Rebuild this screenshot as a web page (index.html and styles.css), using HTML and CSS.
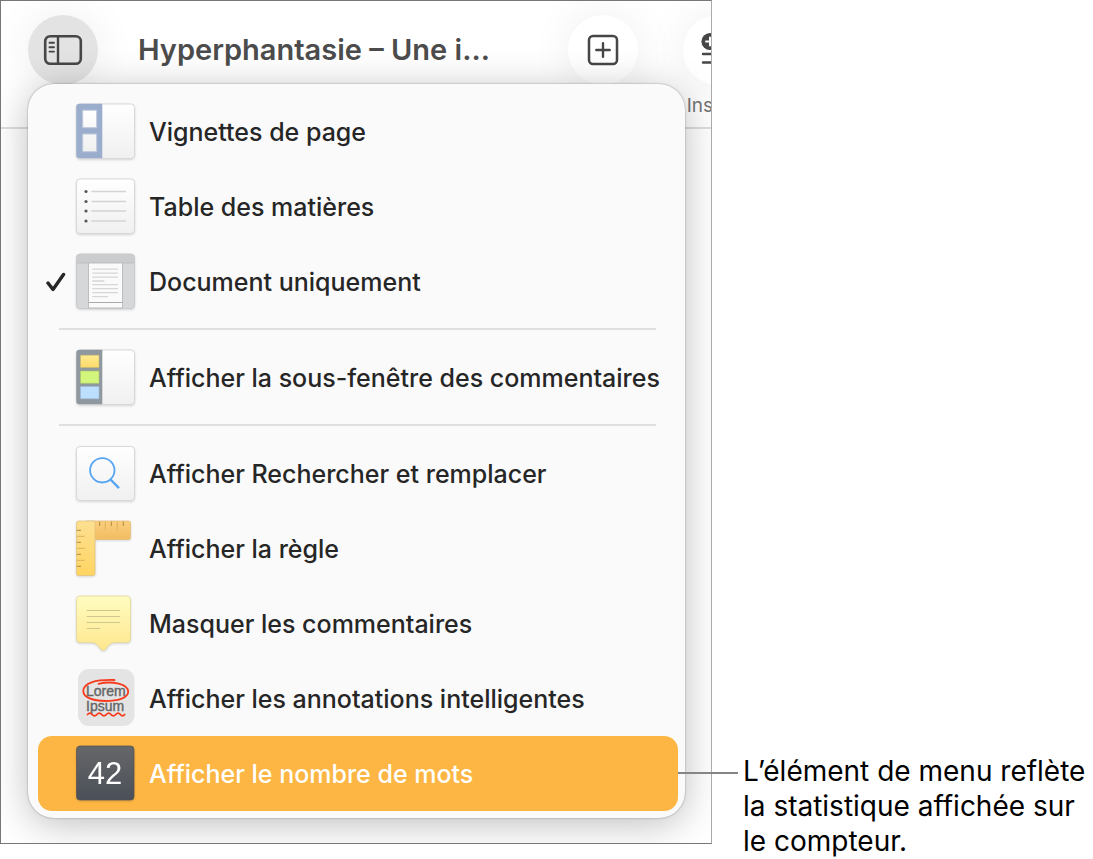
FILE: index.html
```html
<!DOCTYPE html>
<html lang="fr">
    <head>
        <meta charset="utf-8">
        <title>Menu Présentation</title>
        <link rel="stylesheet" href="styles.css">
    </head>
    <body>
        <div class="figure">
            <div class="window">
                <div class="toolbar">
                    <button class="tool tool-view" type="button" aria-label="Présentation">
                        <svg width="40" height="32" viewBox="0 0 40 32" fill="none" stroke="#464646">
                            <rect x="2.2" y="2.2" width="35.6" height="27.6" rx="5" stroke-width="2.6"/>
                            <path d="M15 2v28" stroke-width="2.4"/>
                            <path d="M6.5 8.8h4.5M6.5 13.2h4.5M6.5 17.6h4.5" stroke-width="1.9" stroke-linecap="round"/>
                        </svg>
                    </button>
                    <h1 class="title">Hyperphantasie – Une i...</h1>
                    <button class="tool" type="button" aria-label="Ajouter une page">
                        <svg width="32" height="32" viewBox="0 0 32 32" fill="none" stroke="#464646">
                            <rect x="2" y="2" width="28" height="28" rx="4" stroke-width="2.5"/>
                            <path d="M16 9.3v13.4M9.3 16h13.4" stroke-width="2.4" stroke-linecap="round"/>
                        </svg>
                    </button>
                    <div class="insert">
                        <button class="tool" type="button" aria-labelledby="insert-label">
                            <svg width="36" height="36" viewBox="0 0 36 36" fill="none" stroke="#464646" stroke-width="2.4" stroke-linecap="round">
                                <circle cx="10" cy="9.5" r="8.6" fill="#464646" stroke="none"/>
                                <path d="M10 5.5v8M6 9.500h8" stroke="#fff" stroke-width="2"/>
                                <path d="M23 5h11M23 13h11M3 22h31M3 30.5h31"/>
                            </svg>
                        </button>
                        <span id="insert-label">Insérer</span>
                    </div>
                </div>
                <div class="menu" role="menu">
                    <button class="item" type="button" role="menuitem">
                        <span class="check"></span>
                        <svg class="icon" viewBox="0 0 60 58">
                            <defs>
                                <linearGradient id="paper" x1="0" y1="0" x2="0" y2="1">
                                    <stop offset="0" stop-color="#fff"/>
                                    <stop offset="1" stop-color="#f0f0f0"/>
                                </linearGradient>
                            </defs>
                            <rect x="1.5" y="1" width="58" height="54.5" rx="3.5" fill="url(#paper)" stroke="#d9d9d9"/>
                            <path d="M27.3 .8v54.5H4.5a3.2 3.2 0 0 1-3.2-3.2V4A3.2 3.2 0 0 1 4.5.8z" fill="#9badcc"/>
                            <path d="M7.7 7.2h14v17.5h-14zM7.7 31h14v17.7h-14z" fill="url(#paper)" stroke="#bdc8dc"/>
                        </svg>
                        Vignettes de page
                    </button>
                    <button class="item" type="button" role="menuitem">
                        <span class="check"></span>
                        <svg class="icon" viewBox="0 0 60 58">
                            <rect x="1.5" y="1" width="58" height="54.5" rx="3.5" fill="url(#paper)" stroke="#d9d9d9"/>
                            <g fill="#55575a">
                                <circle cx="11" cy="13.5" r="1.6"/>
                                <circle cx="11" cy="23.5" r="1.6"/>
                                <circle cx="11" cy="33" r="1.6"/>
                                <circle cx="11" cy="43" r="1.6"/>
                            </g>
                            <path d="M16.3 13.5H51M16.3 23.5H51M16.3 33H51M16.3 43H51" stroke="#d4d4d4" stroke-width="1.4"/>
                        </svg>
                        Table des matières
                    </button>
                    <button class="item" type="button" role="menuitem">
                        <span class="check">
                            <svg width="20" height="20" viewBox="0 0 20 20" fill="none" stroke="#262626" stroke-width="3.4" stroke-linecap="round" stroke-linejoin="round">
                                <path d="M2 11l5 6.5L17.5 2.5"/>
                            </svg>
                        </span>
                        <svg class="icon" viewBox="0 0 60 58">
                            <rect x="1.5" y="1" width="58" height="54.5" rx="3.5" fill="#d5d7d9" stroke="#c9cbcd"/>
                            <path d="M1.5 10V4.5A3.5 3.5 0 0 1 5 1h51a3.5 3.5 0 0 1 3.5 3.5V10z" fill="#cbcccd"/>
                            <path d="M1.5 10h58" stroke="#bebfc0"/>
                            <path d="M13.5 10h34v45h-34z" fill="#fafafa" stroke="#bcbdbf"/>
                            <path d="M13.5 49.5h34" stroke="#a9aaac"/>
                            <path d="M17.3 16.2H43M17.3 20.2H43M17.3 24.2H43M17.3 28h12M17.3 31.7H43M17.3 35.7H43M17.3 39.7H43M17.3 43.7H33" stroke="#d5d6d7" stroke-width="1.3"/>
                        </svg>
                        Document uniquement
                    </button>
                    <hr class="separator">
                    <button class="item" type="button" role="menuitem">
                        <span class="check"></span>
                        <svg class="icon" viewBox="0 0 60 58">
                            <defs>
                                <linearGradient id="note-yellow" x1="0" y1="0" x2="0" y2="1">
                                    <stop offset="0" stop-color="#ffea91"/>
                                    <stop offset="1" stop-color="#fcdb68"/>
                                </linearGradient>
                            </defs>
                            <rect x="1.5" y="1" width="58" height="54.5" rx="3.5" fill="url(#paper)" stroke="#d9d9d9"/>
                            <path d="M27.3 .8v54.5H4.5a3.2 3.2 0 0 1-3.2-3.2V4A3.2 3.2 0 0 1 4.5.8z" fill="#8f979f"/>
                            <path d="M5.5 6.2H24v12.3H5.5z" fill="url(#note-yellow)" stroke="#c8b96f" stroke-width=".6"/>
                            <path d="M5.5 22H24v12.3H5.5z" fill="#d2f57c" stroke="#abc66b" stroke-width=".6"/>
                            <path d="M5.5 37.5H24v12.3H5.5z" fill="#bddfff" stroke="#9cb9d4" stroke-width=".6"/>
                        </svg>
                        Afficher la sous-fenêtre des commentaires
                    </button>
                    <hr class="separator">
                    <button class="item" type="button" role="menuitem">
                        <span class="check"></span>
                        <svg class="icon" viewBox="0 0 60 58">
                            <rect x="1.5" y="1.5" width="58" height="54" rx="3.5" fill="url(#paper)" stroke="#d9d9d9"/>
                            <g fill="none" stroke="#56a5f2">
                                <circle cx="27.3" cy="25.3" r="12.2" stroke-width="1.8"/>
                                <path d="M35.5 34.5l8.5 8.7" stroke-width="2.4"/>
                            </g>
                        </svg>
                        Afficher Rechercher et remplacer
                    </button>
                    <button class="item" type="button" role="menuitem">
                        <span class="check"></span>
                        <svg class="icon" viewBox="0 0 60 58">
                            <defs>
                                <linearGradient id="ruler-v" x1="0" y1="0" x2="0" y2="1">
                                    <stop offset="0" stop-color="#fddf91"/>
                                    <stop offset="1" stop-color="#ffd562"/>
                                </linearGradient>
                                <linearGradient id="ruler-h" x1="0" y1="0" x2="0" y2="1">
                                    <stop offset="0" stop-color="#fccd7c"/>
                                    <stop offset="1" stop-color="#f2bd61"/>
                                </linearGradient>
                            </defs>
                            <rect x="10" y="1" width="45.5" height="18.5" rx="2" fill="url(#ruler-h)" stroke="#e3bb75" stroke-width=".7"/>
                            <rect x="1.5" y="1" width="18.5" height="54.5" rx="2" fill="url(#ruler-v)" stroke="#e0c078" stroke-width=".7"/>
                            <path d="M1.8 10.3H6M1.8 22.3H6M1.8 34.3H6M1.8 46.3H6M24.7 1.5V6M36.3 1.5V6M48.3 1.5V6" stroke="#ab8b43"/>
                            <path d="M1.8 16.3h8M1.8 28.3h8M1.8 40.3h8M30.3 1.5v8M42.3 1.5v8" stroke="#dcb35e"/>
                        </svg>
                        Afficher la règle
                    </button>
                    <button class="item" type="button" role="menuitem">
                        <span class="check"></span>
                        <svg class="icon" viewBox="0 0 60 58">
                            <defs>
                                <linearGradient id="note" x1="0" y1="0" x2="0" y2="1">
                                    <stop offset="0" stop-color="#fffcc0"/>
                                    <stop offset="1" stop-color="#fee78e"/>
                                </linearGradient>
                            </defs>
                            <path d="M5 1h47a3.5 3.5 0 0 1 3.5 3.5V44a3.5 3.5 0 0 1-3.5 3.5H41c-4 0-6 1-8 3.5l-2.5 3.5q-2.2 2-4.4 0L23.5 51c-2-2.5-4-3.5-8-3.5H5A3.5 3.5 0 0 1 1.5 44V4.5A3.5 3.5 0 0 1 5 1z" fill="url(#note)" stroke="#e2d799" stroke-width=".8"/>
                            <path d="M11.7 15.5H45M11.7 21.5H45M11.7 27.5H45M11.7 33.5h13.6" stroke="#cfc78f"/>
                        </svg>
                        Masquer les commentaires
                    </button>
                    <button class="item" type="button" role="menuitem">
                        <span class="check"></span>
                        <svg class="icon flat" viewBox="0 0 60 58">
                            <rect x="3" y="-1" width="56.5" height="57" rx="11" fill="#e4e4e4"/>
                            <text class="lorem" x="11" y="26">Lorem</text>
                            <text class="lorem" x="11" y="41">Ipsum</text>
                            <g fill="none" stroke="#f83a1c" stroke-linecap="round">
                                <path d="M23.5 13.8C37 10.5 53.5 14 53.2 21.8 53 28.5 42 31 30.5 31 18 31 8.3 27.5 8.3 21 8.3 13 20 9.5 39.5 10" stroke-width="1.8"/>
                                <path d="M12.5 44.5q2.4-2.8 4.7 0t4.7 0 4.7 0 4.7 0 4.7 0 4.7 0 4.7 0 4.2 0" stroke-width="1.8"/>
                            </g>
                        </svg>
                        Afficher les annotations intelligentes
                    </button>
                    <button class="item selected" type="button" role="menuitem">
                        <span class="check"></span>
                        <svg class="icon" viewBox="0 0 60 58">
                            <defs>
                                <linearGradient id="counter" x1="0" y1="0" x2="0" y2="1">
                                    <stop offset="0" stop-color="#666769"/>
                                    <stop offset="1" stop-color="#4a4f58"/>
                                </linearGradient>
                            </defs>
                            <rect x="1.5" y="1" width="57.5" height="54" rx="3.5" fill="url(#counter)" stroke="#4f5053" stroke-width=".7"/>
                            <text class="count" x="30" y="39">42</text>
                        </svg>
                        Afficher le nombre de mots
                    </button>
                </div>
            </div>
            <p class="callout">L’élément de menu reflète la statistique affichée sur le compteur.</p>
        </div>
    </body>
</html>
```
FILE: styles.css
```css
* {
    box-sizing: border-box;
}
body {
    margin: 0;
    background: #fff;
    font-family: Inter, "Liberation Sans", Arial, sans-serif;
}
button {
    border: 0;
    padding: 0;
    background: none;
    font: inherit;
    color: inherit;
}
.figure {
    display: flex;
    align-items: flex-end;
}
.window {
    flex: 1;
    min-width: 0;
    overflow: hidden;
    margin-bottom: 15px;
    border: 1px solid #77767b;
    border-right-color: #aaa;
}
.toolbar {
    display: flex;
    align-items: flex-start;
    height: 128px;
    padding: 14px 0 0 27px;
    border-bottom: 2px solid #dedede;
}
.tool {
    display: flex;
    flex: none;
    align-items: center;
    justify-content: center;
    width: 70px;
    height: 70px;
    border-radius: 50%;
    background: #fff;
    box-shadow: 0 0 44px rgba(0, 0, 0, 0.07);
}
.tool-view {
    background: #e3e3e3;
}
.title {
    flex: 1;
    margin: 0 0 0 40px;
    font-size: 29px;
    font-weight: 600;
    line-height: 70px;
    white-space: nowrap;
    color: #4c4c4c;
}
.insert {
    display: flex;
    flex: none;
    flex-direction: column;
    align-items: center;
    gap: 8px;
    width: 70px;
    margin: 0 -42px 0 45px;
    font-size: 19px;
    line-height: 26px;
    color: #747474;
}
.menu {
    position: relative;
    display: flex;
    flex-direction: column;
    margin: -45px 26px 25px 27px;
    padding: 10px 7px 7px 10px;
    border-radius: 26px;
    background: #fafafa;
    box-shadow: 0 0 2px rgba(0, 0, 0, 0.4), 0 6px 38px rgba(0, 0, 0, 0.26);
}
.item {
    display: flex;
    align-items: center;
    height: 75px;
    padding-left: 8px;
    border-radius: 14px;
    font-size: 25px;
    font-weight: 500;
    text-align: left;
    white-space: nowrap;
    color: #262626;
}
.selected {
    background: #fdb643;
    color: #fff;
}
.check {
    display: flex;
    width: 20px;
}
.icon {
    flex: none;
    width: 60px;
    height: 58px;
    margin: 0 14px 0 9px;
    overflow: visible;
    filter: drop-shadow(0 1px 1px rgba(0, 0, 0, 0.15));
}
.flat {
    filter: none;
}
.lorem {
    font: 14px "Liberation Sans", Arial, sans-serif;
    fill: #666;
    stroke: #666;
    stroke-width: 0.4px;
}
.count {
    font: 31px "Liberation Sans", Arial, sans-serif;
    text-anchor: middle;
    fill: #fff;
}
.separator {
    width: auto;
    height: 2px;
    margin: 9px 22px 10px 21px;
    border: 0;
    background: #dfdfdf;
}
.callout {
    position: relative;
    flex: 0 0 381px;
    margin: 0;
    padding-left: 31px;
    font-size: 28px;
    line-height: 35px;
    color: #000;
}
/* leader line to the selected item */
.callout::before {
    content: "";
    position: absolute;
    top: 18px;
    left: -34px;
    width: 60px;
    height: 2px;
    background: #858585;
}
```
